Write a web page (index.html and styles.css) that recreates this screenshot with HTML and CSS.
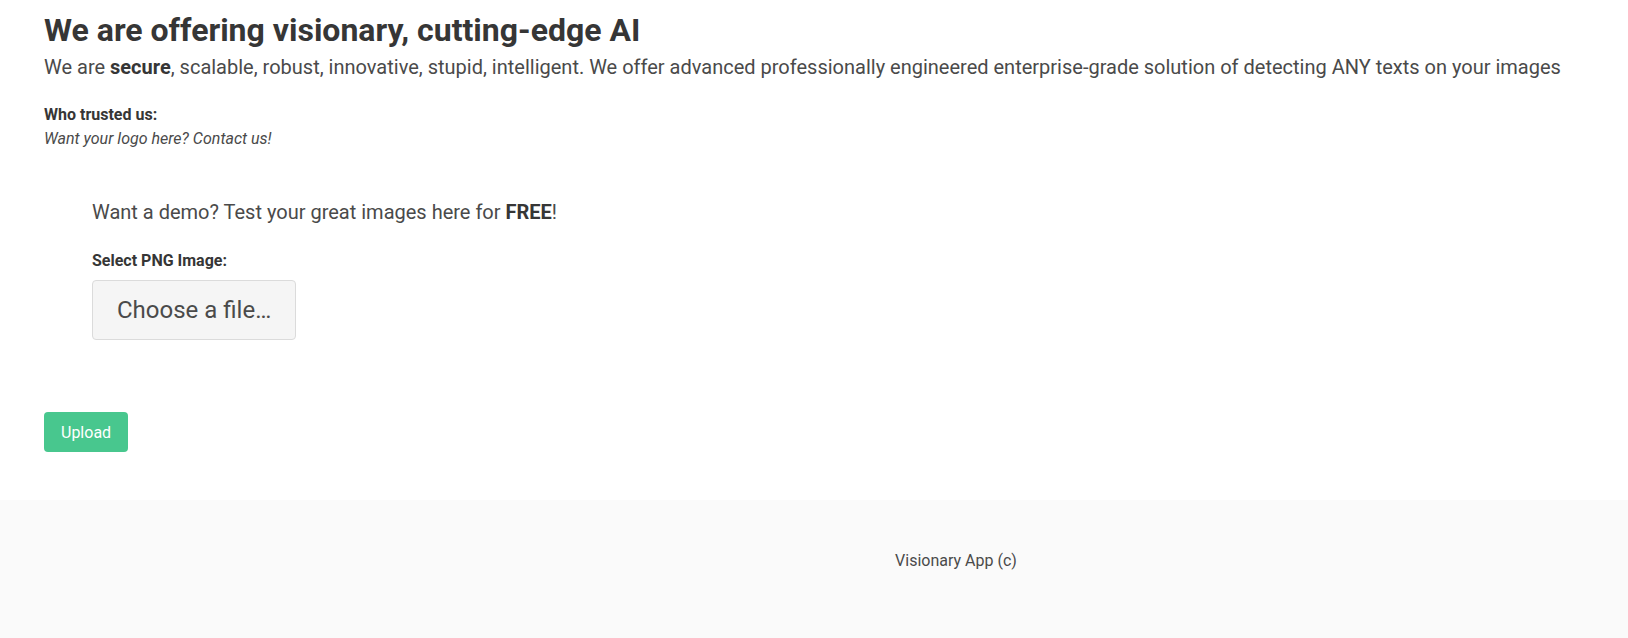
FILE: index.html
```html
<!DOCTYPE html>
<html lang="en">
<head>
<meta charset="utf-8">
<title>Visionary App</title>
<link rel="stylesheet" href="styles.css">
</head>
<body>
<section class="hero">
  <h1 class="title">We are offering visionary, cutting-edge AI</h1>
  <p class="subtitle">We are <strong>secure</strong>, scalable, robust, innovative, stupid, intelligent. We offer advanced professionally engineered enterprise-grade solution of detecting ANY texts on your images</p>
  <div class="trusted">
    <p class="trusted-label">Who trusted us:</p>
    <p class="trusted-note">Want your logo here? Contact us!</p>
  </div>
  <div class="demo">
    <p class="demo-lead">Want a demo? Test your great images here for <strong>FREE</strong>!</p>
    <label class="label" for="file">Select PNG Image:</label>
    <label class="file">
      <input class="file-input" id="file" type="file" accept="image/png">
      <span class="file-cta">Choose a file…</span>
    </label>
  </div>
  <button class="button" type="button">Upload</button>
</section>
<footer class="footer">
  <p class="footer-text">Visionary App (c)</p>
</footer>
</body>
</html>
```

FILE: styles.css
```css
* { box-sizing: border-box; }
html, body { margin: 0; padding: 0; }
body {
  font-family: Roboto, "Liberation Sans", sans-serif;
  font-size: 16px;
  line-height: 1.5;
  color: #4a4a4a;
  background: #fff;
}
p, h1 { margin: 0; }
strong { color: #363636; font-weight: 700; }

.hero {
  padding: 12px 44px 48px;
}
.title {
  font-size: 32px;
  font-weight: 700;
  line-height: 1.125;
  color: #363636;
}
.subtitle {
  margin-top: 7px;
  font-size: 20px;
  line-height: 1.25;
  color: #4a4a4a;
}
.trusted { margin-top: 23px; }
.trusted-label { font-weight: 700; color: #363636; }
.trusted-note { font-style: italic; }

.demo {
  margin-top: 49px;
  padding-left: 48px;
}
.demo-lead { font-size: 20px; line-height: 1.25; }
.label {
  display: block;
  margin-top: 24px;
  margin-bottom: 7px;
  font-weight: 700;
  color: #363636;
}
.file { display: inline-flex; position: relative; cursor: pointer; }
.file-input {
  position: absolute;
  inset: 0;
  opacity: 0;
  width: 100%;
  cursor: pointer;
}
.file-cta {
  display: inline-flex;
  align-items: center;
  height: 60px;
  padding: 0 24px;
  font-size: 24px;
  color: #4a4a4a;
  background: #f5f5f5;
  border: 1px solid #dbdbdb;
  border-radius: 4px;
}

.button {
  display: inline-flex;
  align-items: center;
  justify-content: center;
  margin-top: 72px;
  height: 40px;
  padding: 0 16px;
  font-family: inherit;
  font-size: 16px;
  color: #fff;
  background: #48c78e;
  border: 1px solid transparent;
  border-radius: 4px;
  cursor: pointer;
}

.footer {
  background: #fafafa;
  padding: 49px 24px 96px;
}
.footer-text {
  text-align: center;
  padding-left: 284px;
}
```
